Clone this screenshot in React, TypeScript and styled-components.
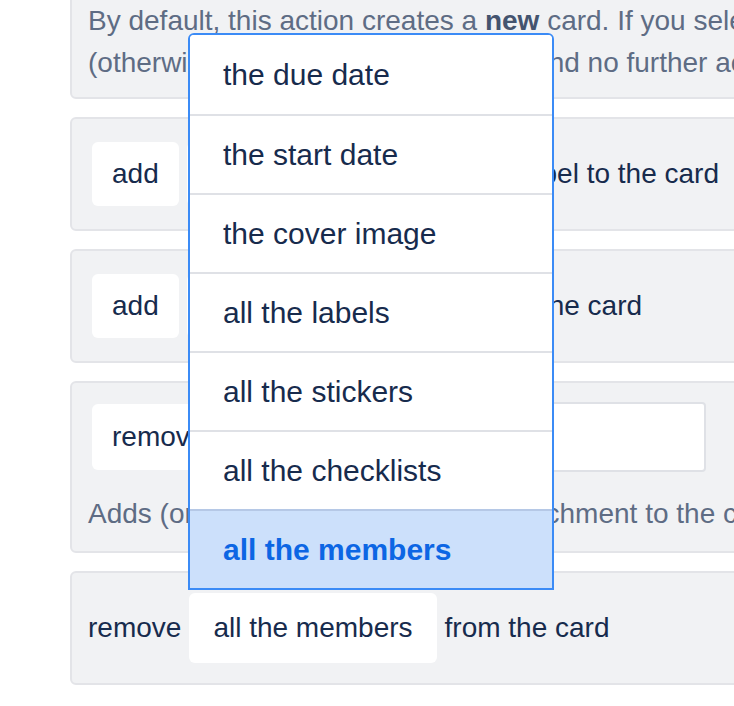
import styled, { createGlobalStyle } from 'styled-components';

const GlobalStyle = createGlobalStyle`
  html, body {
    margin: 0;
    padding: 0;
    background: #ffffff;
    overflow: hidden;
  }
  body {
    font-family: "Liberation Sans", Helvetica, Arial, sans-serif;
    color: #172b4d;
  }
`;

const Page = styled.div`
  position: relative;
  display: flex;
  flex-direction: column;
  gap: 18px;
  margin-top: -22px;
  padding-left: 70px;
  width: 900px;
  font-size: 28px;
  line-height: 42px;
`;

const Card = styled.div<{ $padTop?: number; $padBottom?: number }>`
  display: flex;
  flex-direction: column;
  background: #f1f2f4;
  border: 2px solid #e3e4e8;
  border-radius: 6px;
  padding: ${(p) => p.$padTop ?? 23}px 16px ${(p) => p.$padBottom ?? p.$padTop ?? 23}px;
`;

const Description = styled.p`
  margin: 0;
  color: #5e6c84;
  white-space: nowrap;

  b {
    color: #44546f;
  }
`;

const Row = styled.div<{ $height?: number }>`
  display: flex;
  align-items: center;
  gap: 8px;
  height: ${(p) => p.$height ?? 64}px;
  white-space: nowrap;
`;

const Select = styled.div<{ $pad?: number; $width?: number; $height?: number; $first?: boolean }>`
  display: flex;
  align-items: center;
  box-sizing: border-box;
  height: ${(p) => p.$height ?? 64}px;
  ${(p) => (p.$width ? `width: ${p.$width}px;` : '')}
  padding: 0 ${(p) => p.$pad ?? 20}px;
  margin-left: ${(p) => (p.$first ? 4 : 0)}px;
  background: #ffffff;
  border-radius: 6px;
  color: #172b4d;
  flex-shrink: 0;
`;

const TextInput = styled.div`
  box-sizing: border-box;
  width: 280px;
  height: 70px;
  background: #ffffff;
  border: 2px solid #dfe1e6;
  border-radius: 4px;
  flex-shrink: 0;
`;

const Spacer = styled.div`
  height: 21px;
`;

const Menu = styled.ul`
  position: absolute;
  top: 55px;
  left: 188px;
  box-sizing: border-box;
  width: 366px;
  margin: 0;
  padding: 0;
  list-style: none;
  background: #ffffff;
  border: 2px solid #3b8bf6;
  border-radius: 6px 6px 0 0;
  font-size: 30px;
  overflow: hidden;
`;

const MenuItem = styled.li<{ $active?: boolean }>`
  display: flex;
  align-items: center;
  height: 77px;
  padding-left: 33px;
  color: ${(p) => (p.$active ? '#0c66e4' : '#172b4d')};
  font-weight: ${(p) => (p.$active ? 700 : 400)};
  background: ${(p) => (p.$active ? '#cce0fb' : '#ffffff')};
  border-top: 2px solid ${(p) => (p.$active ? '#b5c8e6' : '#dfe1e6')};

  &:first-child {
    border-top: none;
    height: 79px;
  }
`;

const options = [
  'the due date',
  'the start date',
  'the cover image',
  'all the labels',
  'all the stickers',
  'all the checklists',
  'all the members',
];

export default function App() {
  return (
    <>
      <GlobalStyle />
      <Page>
        <Card $padTop={20} $padBottom={13}>
          <Description>
            By default, this action creates a <b>new</b> card. If you select an existing one, it is updated instead
          </Description>
          <Description>(otherwise an empty card is added) and no further actions are run.</Description>
        </Card>

        <Card>
          <Row>
            <Select $first>add</Select>
            <Select $width={325}>the Important</Select>
            <span>label to the card</span>
          </Row>
        </Card>

        <Card>
          <Row>
            <Select $first>add</Select>
            <Select $width={315}>the Todo checklist</Select>
            <span>to the card</span>
          </Row>
        </Card>

        <Card $padTop={19} $padBottom={16}>
          <Row $height={70}>
            <Select $first $height={66}>remove</Select>
            <Select $width={185} $height={66}>the link</Select>
            <TextInput />
          </Row>
          <Spacer />
          <Description>Adds (or removes) the link as an attachment to the card</Description>
        </Card>

        <Card $padTop={20}>
          <Row $height={70}>
            <span>remove</span>
            <Select $pad={24} $height={70}>all the members</Select>
            <span>from the card</span>
          </Row>
        </Card>

        <Menu>
          {options.map((o) => (
            <MenuItem key={o} $active={o === 'all the members'}>
              {o}
            </MenuItem>
          ))}
        </Menu>
      </Page>
    </>
  );
}
